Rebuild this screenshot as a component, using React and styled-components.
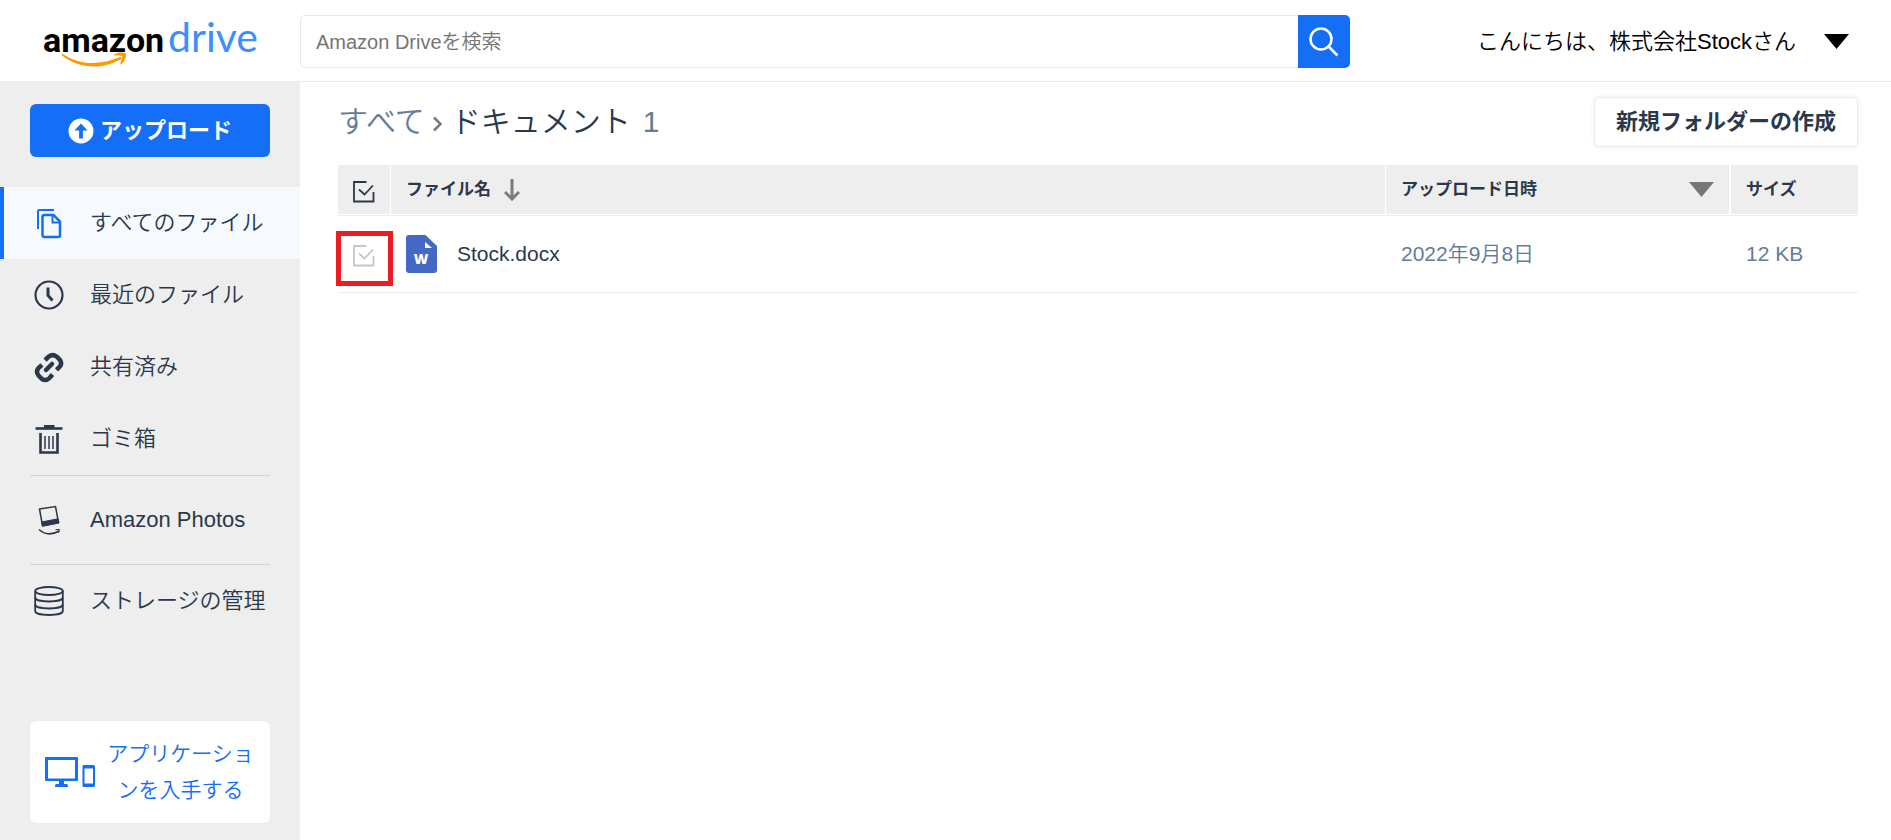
import React from "react";
import styled, { createGlobalStyle, css } from "styled-components";

const blue = "#146ef6";
const ink = "#2b384b";
const slate = "#647b9b";
const grey = "#eeeeee";

const GlobalStyle = createGlobalStyle`
  *, *::before, *::after { box-sizing: border-box; }
  body {
    margin: 0;
    background: #fff;
    color: ${ink};
    font-family: "Liberation Sans", "Noto Sans CJK JP", sans-serif;
    font-weight: 350;
    font-size: 22px;
    line-height: 28px;
  }
  button, input { font: inherit; color: inherit; margin: 0; }
  a { color: inherit; text-decoration: none; }
  svg { display: block; flex: none; }
`;

const Page = styled.div`
  display: flex;
  flex-direction: column;
  min-height: 100vh;
`;

const Header = styled.header`
  display: flex;
  align-items: center;
  height: 82px;
  padding-top: 2px;
  border-bottom: 1px solid #ececec;
`;

const LogoLink = styled.a`
  flex: none;
  width: 300px;
  padding-left: 41px;
`;

const SearchForm = styled.form`
  display: flex;
  flex: 0 1 1050px;
  height: 53px;
`;

const SearchInput = styled.input`
  flex: 1;
  min-width: 0;
  padding: 0 15px;
  border: 1px solid #e8e8e8;
  border-right: 0;
  border-radius: 5px 0 0 5px;
  background: #fff;
  font-size: 20px;
  outline: none;
  &::placeholder { color: #757575; opacity: 1; }
`;

const SearchButton = styled.button`
  display: flex;
  align-items: center;
  justify-content: center;
  width: 52px;
  padding: 0;
  border: 0;
  border-radius: 0 5px 5px 0;
  background: ${blue};
  color: #fff;
`;

const AccountButton = styled.button`
  display: flex;
  align-items: center;
  gap: 28px;
  margin-left: auto;
  padding: 0 42px 0 16px;
  border: 0;
  background: none;
  color: #000;
  white-space: nowrap;
`;

const Body = styled.div`
  display: flex;
  flex: 1;
`;

const Sidebar = styled.aside`
  display: flex;
  flex-direction: column;
  flex: none;
  width: 300px;
  padding: 22px 0 17px;
  background: ${grey};
`;

const UploadButton = styled.button`
  display: flex;
  align-items: center;
  justify-content: center;
  gap: 6px;
  height: 53px;
  margin: 0 30px 30px;
  padding: 0;
  border: 0;
  border-radius: 6px;
  background: ${blue};
  color: #fff;
  font-weight: 700;
`;

const NavList = styled.ul`
  margin: 0;
  padding: 0;
  list-style: none;
`;

const NavItem = styled.li`
  ${(p) => p.$divided && css`
    &::before {
      content: "";
      display: block;
      height: 1px;
      margin: 0 30px;
      background: #d3d3d3;
    }
  `}
`;

const NavLink = styled.a`
  display: flex;
  align-items: center;
  gap: 25px;
  height: ${(p) => (p.$tall ? 88 : 72)}px;
  padding-left: 29px;
  border-left: 4px solid ${(p) => (p.$active ? blue : "transparent")};
  background: ${(p) => (p.$active ? "#f6faff" : "transparent")};
  white-space: nowrap;
  svg { color: ${(p) => (p.$active ? blue : ink)}; }
`;

const AppsLink = styled.a`
  display: flex;
  align-items: center;
  gap: 11px;
  height: 102px;
  margin: auto 30px 0;
  padding: 0 15px;
  border-radius: 6px;
  background: #fff;
  color: ${blue};
  font-size: 21px;
  line-height: 36px;
  text-align: center;
`;

const Main = styled.main`
  flex: 1;
  min-width: 0;
  padding: 15px 33px 15px 38px;
`;

const TitleRow = styled.div`
  display: flex;
  align-items: center;
  justify-content: space-between;
  margin-bottom: 18px;
`;

const Breadcrumb = styled.h1`
  display: flex;
  align-items: center;
  margin: 0;
  font-size: 30px;
  font-weight: inherit;
  line-height: 48px;
  svg { margin: 4px 8px 0; }
`;

const Crumb = styled.a`
  color: ${slate};
`;

const Count = styled.span`
  margin-left: 12px;
  color: ${slate};
`;

const NewFolderButton = styled.button`
  height: 50px;
  padding: 0 21px;
  border: 1px solid #ececec;
  border-radius: 5px;
  background: #fff;
  box-shadow: 0 0 5px rgba(0, 0, 0, 0.08);
  font-weight: 700;
`;

const FileTable = styled.table`
  width: 100%;
  table-layout: fixed;
  border-collapse: separate;
  border-spacing: 0;
`;

const Col = styled.col`
  width: ${(p) => p.$width};
`;

const HeadCell = styled.th`
  height: 50px;
  padding: 0 15px;
  border-right: ${(p) => p.$gap || 0}px solid #fff;
  border-bottom: 1px solid #fff;
  background: ${grey};
  font-size: 17px;
  font-weight: 700;
  text-align: left;
`;

const HeadContent = styled.div`
  display: flex;
  align-items: center;
  gap: 13px;
  justify-content: ${(p) => (p.$spread ? "space-between" : "flex-start")};
`;

const Cell = styled.td`
  position: relative;
  height: 78px;
  padding: 0 15px;
  border: 1px solid #ececec;
  border-width: 1px 0;
  color: ${slate};
  font-size: 21px;
`;

const FileLink = styled.a`
  display: flex;
  align-items: center;
  gap: 20px;
  color: ${ink};
`;

const Tick = styled.label`
  position: relative;
  display: block;
  width: 22px;
  padding-top: 4px;
  color: ${(p) => (p.$faint ? "#c3c6cc" : ink)};
  input {
    position: absolute;
    inset: 0;
    width: 100%;
    height: 100%;
    opacity: 0;
  }
`;

const Highlight = styled.span`
  position: absolute;
  top: 15px;
  left: -2px;
  width: 57px;
  height: 55px;
  border: 5px solid #ed1c24;
  pointer-events: none;
`;

const Logo = () => (
  <svg width="230" height="66" viewBox="0 -7 230 66" role="img" aria-label="amazon drive">
    <text x="2" y="36" fontFamily="Roboto, 'Liberation Sans', sans-serif" fontSize="34" fontWeight="700" fill="#000">amazon</text>
    <text x="127" y="36" fontFamily="Lato, sans-serif" fontSize="41" fontWeight="400" fill="#3e8efb">drive</text>
    <path d="M22 38c17 12 38 11 57 3 1.500-.6 2.500 1 1 2C62 54 38 53 21 39.500c-1-1 0-2.200 1-1.500z" fill="#ff9900" />
    <path d="M73 38.500c4-2.500 9-2.500 11.500-1.300 1.500 2-.5 8-4 11-.8.600-1.500.2-1.100-.6 1-2.500 2.500-6.500 1.700-7.600-1-1.100-4.800-.8-7.300-.5-1 .1-1.400-.5-.8-1z" fill="#ff9900" />
  </svg>
);

const SearchIcon = () => (
  <svg width="30" height="30" viewBox="0 0 30 30" fill="none" stroke="currentColor" strokeWidth="2.500">
    <circle cx="12" cy="12" r="10.500" />
    <path d="M19.500 19.500 28.500 28.500" />
  </svg>
);

const Caret = ({ color }) => (
  <svg width="25" height="15" viewBox="0 0 25 15" fill={color}>
    <path d="M0 0h25L12.500 15z" />
  </svg>
);

const UploadIcon = () => (
  <svg width="26" height="26" viewBox="0 0 26 26">
    <circle cx="13" cy="13" r="12.500" fill="#fff" />
    <path d="M13 5.500 6.500 12.500h4.600V20.500h3.800V12.500h4.600z" fill={blue} />
  </svg>
);

const FilesIcon = () => (
  <svg width="32" height="32" viewBox="0 0 32 32" fill="none" stroke="currentColor" strokeWidth="2">
    <path d="M5 22V4.500Q5 3 6.500 3H21" />
    <path d="M11.500 8H20.500L27 14.500V28Q27 30 25 30H11.500Q9.500 30 9.500 28V10Q9.500 8 11.500 8z" strokeWidth="2.500" />
    <path d="M19.500 8V15.500H27" />
  </svg>
);

const ClockIcon = () => (
  <svg width="32" height="32" viewBox="0 0 32 32" fill="none" stroke="currentColor" strokeWidth="2.200">
    <circle cx="16" cy="16" r="13.500" />
    <path d="M15 8.500V16.500L19.500 21.500" strokeWidth="3" />
  </svg>
);

const LinkIcon = () => (
  <svg width="32" height="32" viewBox="0 0 32 32" fill="none" stroke="currentColor" strokeWidth="4.500">
    <path d="M13 19 19 13" strokeLinecap="round" />
    <path d="M12 9.200 15.500 5.800Q19.500 2.500 23.500 5.500L27 9Q29.500 13 26.500 16L23.500 18.800" />
    <path d="M9 13.800 5.500 17Q2.500 20.500 5.500 24.500L9 28Q13 30.500 16.500 27L19.500 23.500" />
  </svg>
);

const TrashIcon = () => (
  <svg width="32" height="32" viewBox="0 0 32 32" fill="none" stroke="currentColor">
    <path d="M2.500 5.500H29.500" strokeWidth="2.600" />
    <path d="M11 3.500H21.500" strokeWidth="3" />
    <path d="M7.500 10V29.500H24.500V10" strokeWidth="2.600" />
    <path d="M12 13V26M16 13V26M20 13V26" strokeWidth="1.500" />
  </svg>
);

const PhotosIcon = () => (
  <svg width="32" height="32" viewBox="0 0 32 32" fill="none" stroke="currentColor">
    <path d="M6.500 5 22.500 2.500 25.500 18.500 9.500 21.500z" strokeWidth="1.500" />
    <path d="M8.500 18 25 14.800 26 19 9.500 22.300z" fill="currentColor" strokeWidth="1" />
    <path d="M6 25.500Q15 33.500 26 27" strokeWidth="1.600" />
    <path d="M22.500 25.700 26.500 25.500 25.500 29" strokeWidth="1" />
  </svg>
);

const StorageIcon = () => (
  <svg width="32" height="32" viewBox="0 0 32 32" fill="none" stroke="currentColor" strokeWidth="1.800">
    <ellipse cx="16" cy="6" rx="13.800" ry="4" />
    <path d="M2.200 6V26C2.200 31.300 29.800 31.300 29.800 26V6" />
    <path d="M2.200 12.500C2.200 17.800 29.800 17.800 29.800 12.500M2.200 19.500C2.200 24.800 29.800 24.800 29.800 19.500" />
  </svg>
);

const DevicesIcon = () => (
  <svg width="50" height="31" viewBox="0 0 50 31" fill="currentColor">
    <path fillRule="evenodd" d="M1 0H32Q33 0 33 1V23Q33 24 32 24H19V27H22Q23 27 23 30H10Q10 27 11 27H14V24H1Q0 24 0 23V1Q0 0 1 0zM3 3V21.500H30V3z" />
    <path fillRule="evenodd" d="M38.500 8H48.500Q50 8 50 9.500V28.500Q50 30 48.500 30H39Q37.500 30 37.500 28.500V9.500Q37.500 8 38.500 8zM39.500 11.500V26.500H48V11.500z" />
  </svg>
);

const ChevronIcon = () => (
  <svg width="10" height="16" viewBox="0 0 10 16" fill="none" stroke="#757b84" strokeWidth="2.500">
    <path d="M1 1.500 7.500 8 1 14.500" />
  </svg>
);

const CheckIcon = () => (
  <svg width="22" height="22" viewBox="0 0 22 22" fill="none" stroke="currentColor" strokeWidth="1.800">
    <path d="M13.500 1H1V20.500H20.500V11" />
    <path d="M6 8.500 11.500 13.500 20 4.500" />
  </svg>
);

const ArrowDownIcon = () => (
  <svg width="16" height="22" viewBox="0 0 16 22" fill="none" stroke="#7b7b7b" strokeWidth="3">
    <path d="M8 0V20M1 13 8 20 15 13" />
  </svg>
);

const WordIcon = () => (
  <svg width="31" height="38" viewBox="0 0 31 38">
    <path d="M3 0H19.500L31 11V35Q31 38 28 38H3Q0 38 0 35V3Q0 0 3 0z" fill="#4468c6" />
    <path d="M19 7V13H26z" fill="#fff" />
    <text x="15" y="29" textAnchor="middle" fontFamily="'Open Sans', sans-serif" fontSize="14" fontWeight="800" fill="#fff">W</text>
  </svg>
);

const navItems = [
  { label: "すべてのファイル", Icon: FilesIcon, active: true },
  { label: "最近のファイル", Icon: ClockIcon },
  { label: "共有済み", Icon: LinkIcon },
  { label: "ゴミ箱", Icon: TrashIcon },
  { label: "Amazon Photos", Icon: PhotosIcon, divided: true, tall: true },
  { label: "ストレージの管理", Icon: StorageIcon, divided: true },
];

const files = [{ name: "Stock.docx", date: "2022年9月8日", size: "12 KB", marked: true }];

export default function App() {
  return (
    <Page>
      <GlobalStyle />
      <Header>
        <LogoLink href="#"><Logo /></LogoLink>
        <SearchForm role="search">
          <SearchInput type="text" placeholder="Amazon Driveを検索" aria-label="Amazon Driveを検索" />
          <SearchButton type="button" aria-label="検索"><SearchIcon /></SearchButton>
        </SearchForm>
        <AccountButton type="button">
          こんにちは、株式会社Stockさん
          <Caret color="#000" />
        </AccountButton>
      </Header>
      <Body>
        <Sidebar>
          <UploadButton type="button"><UploadIcon />アップロード</UploadButton>
          <nav>
            <NavList>
              {navItems.map(({ label, Icon, active, divided, tall }) => (
                <NavItem key={label} $divided={divided}>
                  <NavLink href="#" $active={active} $tall={tall}>
                    <Icon />
                    {label}
                  </NavLink>
                </NavItem>
              ))}
            </NavList>
          </nav>
          <AppsLink href="#">
            <DevicesIcon />
            <span>アプリケーションを入手する</span>
          </AppsLink>
        </Sidebar>
        <Main>
          <TitleRow>
            <Breadcrumb>
              <Crumb href="#">すべて</Crumb>
              <ChevronIcon />
              ドキュメント
              <Count>1</Count>
            </Breadcrumb>
            <NewFolderButton type="button">新規フォルダーの作成</NewFolderButton>
          </TitleRow>
          <FileTable>
            <colgroup>
              <Col $width="53px" />
              <Col $width="auto" />
              <Col $width="345px" />
              <Col $width="127px" />
            </colgroup>
            <thead>
              <tr>
                <HeadCell $gap={1}>
                  <Tick>
                    <input type="checkbox" aria-label="すべて選択" />
                    <CheckIcon />
                  </Tick>
                </HeadCell>
                <HeadCell $gap={1}>
                  <HeadContent>ファイル名<ArrowDownIcon /></HeadContent>
                </HeadCell>
                <HeadCell $gap={2}>
                  <HeadContent $spread>アップロード日時<Caret color="#777" /></HeadContent>
                </HeadCell>
                <HeadCell>サイズ</HeadCell>
              </tr>
            </thead>
            <tbody>
              {files.map((file) => (
                <tr key={file.name}>
                  <Cell>
                    <Tick $faint>
                      <input type="checkbox" aria-label={file.name} />
                      <CheckIcon />
                    </Tick>
                    {file.marked && <Highlight />}
                  </Cell>
                  <Cell>
                    <FileLink href="#"><WordIcon />{file.name}</FileLink>
                  </Cell>
                  <Cell>{file.date}</Cell>
                  <Cell>{file.size}</Cell>
                </tr>
              ))}
            </tbody>
          </FileTable>
        </Main>
      </Body>
    </Page>
  );
}
